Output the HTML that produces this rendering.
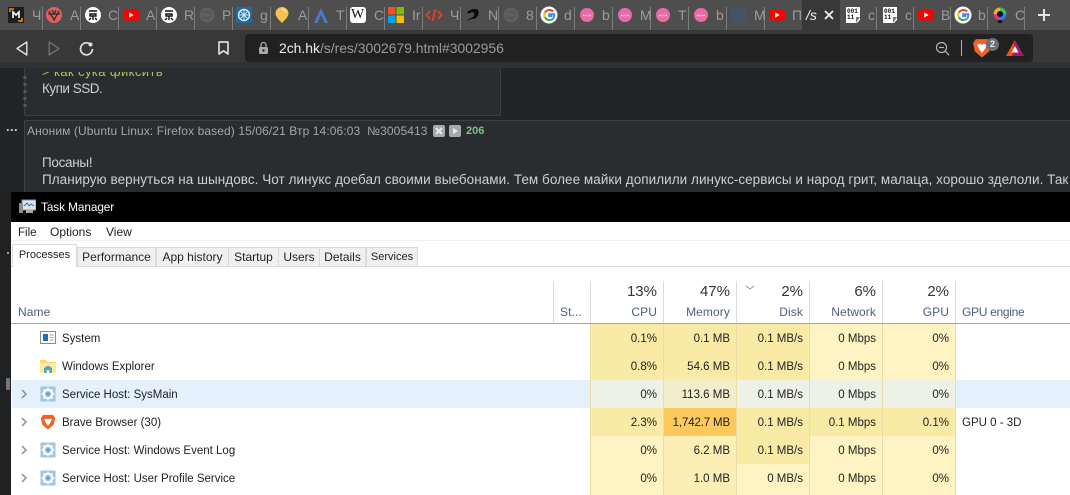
<!DOCTYPE html>
<html><head><meta charset="utf-8">
<style>
html,body{margin:0;padding:0;width:1070px;height:495px;overflow:hidden;background:#222426}
body{position:relative;font-family:"Liberation Sans",sans-serif}
div,span,svg{position:absolute}
span{white-space:nowrap}
.sep{top:7px;width:1px;height:23px;background:#7d7d7d}
.t{top:7px;font-size:14px;color:#9c9c9c;line-height:16px}
.i{top:6px;width:18px;height:18px}
.r{text-align:right;width:60px;font-size:11.5px;color:#222;line-height:18px;white-space:nowrap}
.c{width:73px;height:28px;border-left:1px solid #ecdcA8;box-sizing:border-box}
.l{left:62px;font-size:11.5px;color:#222;line-height:18px}
.h{font-size:12px;color:#4c607a;line-height:16px;letter-spacing:.1px}
.p{text-align:right;width:60px;font-size:15px;color:#333;line-height:18px}
.vs{top:281px;width:1px;height:42px;background:#dcdcdc}
.tab{top:247px;height:19px;background:#f0f0f0;border:1px solid #dadada;border-bottom:none;box-sizing:border-box;font-size:12px;color:#222;line-height:18px;text-align:center}
.ar{left:19px;width:10px;height:10px}
.ic{left:40px;width:16px;height:16px}
</style></head><body>
<svg width="0" height="0" style="left:0;top:0"><defs>
<symbol id="yt" viewBox="0 0 18 18"><rect x="1" y="3.5" width="16" height="11" rx="3" fill="#f00"/><path d="M7.2 6.4v5.2L11.6 9z" fill="#fff"/></symbol>
<symbol id="pk" viewBox="0 0 18 18"><circle cx="9" cy="9" r="7" fill="#e86ca8"/><path d="M5 9.500h1.500M7.500 9.500h1M9.500 9.500h1M11.500 9.500h1.500" stroke="#f9d3e6" stroke-width="1.500"/></symbol>
<symbol id="wh" viewBox="0 0 18 18"><circle cx="9" cy="9" r="8" fill="#fff"/><path d="M5 5h8M6 8h6v2H6zM9 10v4M5 14l2-2M13 14l-2-2" stroke="#111" stroke-width="1.4" fill="none"/></symbol>
<symbol id="gr" viewBox="0 0 18 18"><circle cx="9" cy="9" r="7.500" fill="#5d6063"/><path d="M5 7c3-3 6-1 8 1M5 11c3 2 6 1 8-1" stroke="#53565a" stroke-width="2" fill="none"/></symbol>
<symbol id="g" viewBox="0 0 18 18"><circle cx="9" cy="9" r="8.5" fill="#fff"/><path d="M13.2 5.600A5.200 5.200 0 0 0 4.900 6.600" stroke="#ea4335" stroke-width="2" fill="none"/><path d="M4.900 6.600a5.200 5.200 0 0 0 0 4.800" stroke="#fbbc05" stroke-width="2" fill="none"/><path d="M4.900 11.400a5.200 5.200 0 0 0 8 1.300" stroke="#34a853" stroke-width="2" fill="none"/><path d="M12.900 12.700A5.200 5.200 0 0 0 14.200 8.200H9.200v1.900h3" stroke="#4285f4" stroke-width="2" fill="none"/></symbol>
<symbol id="bin" viewBox="0 0 18 18"><path d="M2 1h14v13l-3 3H2z" fill="#fff"/><path d="M16 11l-4 6v-6z" fill="#777"/><text x="3" y="7" font-size="6" font-weight="bold" font-family="Liberation Mono" fill="#111">001</text><text x="3" y="13" font-size="6" font-weight="bold" font-family="Liberation Mono" fill="#111">11</text></symbol>
<symbol id="gear" viewBox="0 0 16 16"><rect x=".5" y=".5" width="15" height="15" fill="#9cc5e6"/><circle cx="8" cy="8" r="4.200" fill="none" stroke="#fff" stroke-width="2.200"/><path d="M8 1.600v2.400M8 12v2.400M1.600 8H4M12 8h2.400M3.500 3.500l1.700 1.700M10.800 10.800l1.700 1.700M3.500 12.500l1.700-1.700M10.800 5.200l1.700-1.700" stroke="#fff" stroke-width="1.800"/><circle cx="8" cy="8" r="1.600" fill="#5b9bd1"/></symbol>
<symbol id="brave" viewBox="0 0 18 18"><path d="M3.500 1h11l2.500 3.500-1.500 7.500L9 17.500 2.500 12 1 4.500z" fill="#f0622a"/><path d="M4.500 6l3-.8L9 6.300l1.500-1.100 3 .8-2 4L9 13.500 6.500 10z" fill="#fff"/></symbol>
</defs></svg>

<!-- web page -->
<div style="left:24px;top:60px;width:477px;height:56px;background:#2a2d30;border:1px solid #3d4043;box-sizing:border-box;border-radius:2px"></div>
<div style="left:24px;top:120px;width:1060px;height:80px;background:#2a2d30;border:1px solid #3d4043;box-sizing:border-box;border-radius:2px"></div>
<span style="left:42px;top:64px;font-size:13px;line-height:16px;color:#a6c862;letter-spacing:.4px;clip-path:inset(8px 0 0 0)">&gt; как сука фиксить</span>
<span style="left:42px;top:80px;font-size:13.5px;line-height:17px;color:#cfcfcf;letter-spacing:-.5px">Купи SSD.</span>
<span style="left:6px;top:120px;font-size:13px;line-height:14px;color:#c8c8c8;font-weight:bold;letter-spacing:.4px">...</span>
<span style="left:27px;top:124px;font-size:12px;line-height:15px;color:#a3a6a9;letter-spacing:.1px">Аноним (Ubuntu Linux: Firefox based) 15/06/21 Втр 14:06:03 &nbsp;№3005413</span>
<div style="left:433px;top:125px;width:12px;height:12px;background:#a8a8a8;border-radius:2px"></div>
<svg style="left:433px;top:125px" width="12" height="12"><path d="M3 3l6 6M9 3l-6 6" stroke="#e8e8e8" stroke-width="2"/></svg>
<div style="left:449px;top:125px;width:12px;height:12px;background:#a8a8a8;border-radius:2px"></div>
<svg style="left:449px;top:125px" width="12" height="12"><path d="M4 3l5 3-5 3z" fill="#e8e8e8"/></svg>
<span style="left:466px;top:124px;font-size:11px;line-height:15px;color:#7fbe84;font-weight:bold">206</span>
<span style="left:42px;top:154px;font-size:13.5px;line-height:17px;color:#cfcfcf;letter-spacing:-.3px">Посаны!</span>
<span style="left:42px;top:171px;font-size:13.5px;line-height:17px;color:#cfcfcf;letter-spacing:.05px">Планирую вернуться на шындовс. Чот линукс доебал своими выебонами. Тем более майки допилили линукс-сервисы и народ грит, малаца, хорошо зделоли. Так</span>
<!-- dotted left line -->
<svg style="left:22px;top:74px" width="6" height="36"><path d="M3 2V34" stroke="#55585b" stroke-width="3" stroke-dasharray="3 4"/></svg>

<!-- tab strip -->
<div style="left:0;top:0;width:1070px;height:30px;background:#4e4e4e"></div>
<div style="left:0;top:30px;width:1070px;height:32px;background:#383838"></div>
<div style="left:0;top:62px;width:1070px;height:6px;background:#2f3134"></div>
<div style="left:802px;top:0;width:38px;height:30px;background:#383838"></div>

<div class="sep" style="left:42px"></div><div class="sep" style="left:80px"></div><div class="sep" style="left:118px"></div><div class="sep" style="left:156px"></div><div class="sep" style="left:194px"></div><div class="sep" style="left:232px"></div><div class="sep" style="left:270px"></div><div class="sep" style="left:308px"></div><div class="sep" style="left:346px"></div><div class="sep" style="left:384px"></div><div class="sep" style="left:422px"></div><div class="sep" style="left:460px"></div><div class="sep" style="left:498px"></div><div class="sep" style="left:536px"></div><div class="sep" style="left:574px"></div><div class="sep" style="left:612px"></div><div class="sep" style="left:650px"></div><div class="sep" style="left:688px"></div><div class="sep" style="left:726px"></div><div class="sep" style="left:764px"></div><div class="sep" style="left:876px"></div><div class="sep" style="left:913px"></div><div class="sep" style="left:950px"></div><div class="sep" style="left:987px"></div><div class="sep" style="left:1024px"></div>

<!-- tab icons -->
<svg class="i" style="left:8px;width:16px;height:16px;top:7px" viewBox="0 0 16 16"><rect width="16" height="16" fill="#1d1d1d"/><path d="M2 5V2h4M14 11v3h-4" stroke="#f08a24" stroke-width="1.600" fill="none"/><path d="M5 11V5l3 3 3-3v6" stroke="#fff" stroke-width="1.600" fill="none"/></svg>
<span class="t" style="left:32px">Ч</span>
<svg class="i" style="left:45px" viewBox="0 0 18 18"><circle cx="9" cy="9" r="8" fill="#e4605f"/><path d="M4 5l5 9 5-9M7 4l2 4 2-4M3 8h12" stroke="#3a2a2a" stroke-width="1.300" fill="none"/></svg>
<span class="t" style="left:70px">А</span>
<svg class="i" style="left:84px"><use href="#wh"/></svg>
<span class="t" style="left:108px">С</span>
<svg class="i" style="left:122px"><use href="#yt"/></svg>
<span class="t" style="left:146px">А</span>
<svg class="i" style="left:160px"><use href="#wh"/></svg>
<span class="t" style="left:184px">R</span>
<svg class="i" style="left:198px"><use href="#gr"/></svg>
<span class="t" style="left:222px">P</span>
<svg class="i" style="left:236px;width:16px;height:16px;top:7px" viewBox="0 0 16 16"><rect width="16" height="16" fill="#1e6a9e"/><circle cx="8" cy="8" r="5.500" fill="none" stroke="#cfe8f5" stroke-width="1.500"/><path d="M3 8h10M8 3v10M4.500 4.500l7 7M11.500 4.500l-7 7" stroke="#cfe8f5"/></svg>
<span class="t" style="left:260px">g</span>
<svg class="i" style="left:273px" viewBox="0 0 18 18"><path d="M9 1a6.500 6.500 0 0 1 6.500 6.500C15.500 11 11 15 9 17 7 15 2.500 11 2.500 7.500A6.500 6.500 0 0 1 9 1z" fill="#f6c14f"/><path d="M9 3a4 4 0 0 1 4 4" stroke="#fbe29a" stroke-width="1.500" fill="none"/></svg>
<span class="t" style="left:298px">А</span>
<svg class="i" style="left:312px" viewBox="0 0 18 18"><path d="M9 2L2 17h3.500L9 9l3.500 8H16z" fill="#4a78c9"/></svg>
<span class="t" style="left:336px">T</span>
<div style="left:350px;top:7px;width:16px;height:16px;background:#fff;border-radius:3px"></div><span style="left:351px;top:7px;font-size:14px;line-height:16px;color:#111;font-family:'Liberation Serif',serif">W</span>
<span class="t" style="left:374px">С</span>
<svg class="i" style="left:388px;width:16px;height:16px;top:7px" viewBox="0 0 16 16"><rect width="7.500" height="7.500" fill="#f25022"/><rect x="8.500" width="7.500" height="7.500" fill="#7fba00"/><rect y="8.500" width="7.500" height="7.500" fill="#00a4ef"/><rect x="8.500" y="8.500" width="7.500" height="7.500" fill="#ffb900"/></svg>
<span class="t" style="left:412px">Ir</span>
<svg class="i" style="left:425px" viewBox="0 0 18 18"><path d="M5 5L1.500 9 5 13M13 5l3.500 4-3.500 4M10.500 3L7.500 15" stroke="#d8412f" stroke-width="2" fill="none"/></svg>
<span class="t" style="left:450px">Ч</span>
<svg class="i" style="left:464px" viewBox="0 0 18 18"><path d="M3 7c2-4 9-5 11-3 2 3-1 7-2 8-3 1-6 1-9 3 1-2 5-3 7-5 1-2 0-4-2-4-2 1-3 2-5 1z" fill="#0a0a0a"/></svg>
<span class="t" style="left:488px">N</span>
<svg class="i" style="left:502px"><use href="#gr"/></svg>
<span class="t" style="left:526px">8</span>
<svg class="i" style="left:540px"><use href="#g"/></svg>
<span class="t" style="left:564px">d</span>
<svg class="i" style="left:578px"><use href="#pk"/></svg>
<span class="t" style="left:602px">b</span>
<svg class="i" style="left:616px"><use href="#pk"/></svg>
<span class="t" style="left:640px">M</span>
<svg class="i" style="left:654px"><use href="#pk"/></svg>
<span class="t" style="left:678px">T</span>
<svg class="i" style="left:692px"><use href="#pk"/></svg>
<span class="t" style="left:716px">b</span>
<div style="left:731px;top:7px;width:16px;height:16px;background:#465462"></div>
<span class="t" style="left:754px">M</span>
<svg class="i" style="left:768px"><use href="#yt"/></svg>
<span class="t" style="left:792px">П</span>
<span style="left:806px;top:7px;font-size:14px;line-height:16px;color:#f0f0f0;font-style:italic">/s</span>
<svg style="left:823px;top:9px" width="12" height="12"><path d="M2 2l8 8M10 2l-8 8" stroke="#eee" stroke-width="1.800"/></svg>
<svg class="i" style="left:844px"><use href="#bin"/></svg>
<span class="t" style="left:868px">c</span>
<svg class="i" style="left:881px"><use href="#bin"/></svg>
<span class="t" style="left:905px">c</span>
<svg class="i" style="left:917px"><use href="#yt"/></svg>
<span class="t" style="left:941px">B</span>
<svg class="i" style="left:954px"><use href="#g"/></svg>
<span class="t" style="left:978px">b</span>
<svg class="i" style="left:991px" viewBox="0 0 18 18"><circle cx="9" cy="8" r="6.500" fill="#111"/><path d="M9 1.500A6.500 6.500 0 0 1 15.500 8H12a3 3 0 0 0-3-3z" fill="#3fbf5f"/><path d="M15.500 8A6.500 6.500 0 0 1 9 14.500V11a3 3 0 0 0 3-3z" fill="#2f7fe0"/><path d="M9 14.500A6.500 6.500 0 0 1 2.500 8H6a3 3 0 0 0 3 3z" fill="#d83a8a"/><path d="M2.500 8A6.500 6.500 0 0 1 9 1.500V5a3 3 0 0 0-3 3z" fill="#f0b020"/><rect x="7" y="14" width="4" height="3" fill="#111"/></svg>
<span class="t" style="left:1015px">С</span>
<svg style="left:1038px;top:9px" width="12" height="12"><path d="M6 0v12M0 6h12" stroke="#e4e4e4" stroke-width="2"/></svg>

<!-- toolbar -->
<svg style="left:16px;top:41px" width="12" height="15"><path d="M10.800 1v13L1 7.500z" fill="none" stroke="#e2e2e2" stroke-width="1.400" stroke-linejoin="round"/></svg>
<svg style="left:48px;top:41px" width="12" height="15"><path d="M1.200 1v13L11 7.500z" fill="none" stroke="#6e6e6e" stroke-width="1.400" stroke-linejoin="round"/></svg>
<svg style="left:79px;top:41px" width="15" height="15"><path d="M12.500 4.500A6 6 0 1 0 13.500 8" fill="none" stroke="#e2e2e2" stroke-width="1.700"/><circle cx="11.500" cy="3.500" r="2" fill="#e2e2e2"/></svg>
<svg style="left:218px;top:41px" width="11" height="14"><path d="M1 1h9v12L5.500 9.800 1 13z" fill="none" stroke="#dcdcdc" stroke-width="1.700" stroke-linejoin="round"/></svg>
<div style="left:245px;top:34px;width:788px;height:28px;background:#212121;border-radius:4px"></div>
<svg style="left:258px;top:41px" width="11" height="14"><path d="M3 6V4a2.500 2.500 0 0 1 5 0v2" fill="none" stroke="#aaa" stroke-width="1.300"/><rect x="1" y="6" width="9" height="7" rx="1.500" fill="#aaa"/><circle cx="5.500" cy="9.500" r="1.200" fill="#212121"/></svg>
<span style="left:279px;top:39px;font-size:14px;line-height:18px;color:#ededed;letter-spacing:-.05px">2ch.hk<span style="position:static;color:#9a9a9a">/s/res/3002679.html#3002956</span></span>
<svg style="left:935px;top:41px" width="15" height="15"><circle cx="6.500" cy="6.500" r="5" fill="none" stroke="#b5b5b5" stroke-width="1.200"/><path d="M4 6.500h5M10.200 10.200l4 4" stroke="#b5b5b5" stroke-width="1.200"/></svg>
<div style="left:961px;top:40px;width:1px;height:16px;background:#b0b0b0"></div>
<svg style="left:972px;top:38px" width="20" height="20"><use href="#brave"/></svg>
<div style="left:986px;top:38px;width:13px;height:13px;border-radius:50%;background:#6b6f78;color:#eee;font-size:9px;line-height:13px;text-align:center;font-weight:bold">2</div>
<svg style="left:1006px;top:40px" width="18" height="16" viewBox="0 0 18 16"><path d="M9 0L0 16h18z" fill="#9e1f63"/><path d="M9 0L0 16h6z" fill="#ff5000"/><path d="M9 6l-3.500 6.500h7z" fill="#fff"/></svg>

<!-- task manager -->
<div style="left:0;top:192px;width:11px;height:303px;background:#1f2123"></div>
<div style="left:7px;top:252px;width:2px;height:2px;background:#999"></div>
<div style="left:6px;top:378px;width:4px;height:12px;background:#777;border-radius:1px"></div>
<div style="left:11px;top:192px;width:1059px;height:30px;background:#000"></div>
<div style="left:11px;top:222px;width:1059px;height:273px;background:#fff"></div>
<svg style="left:19px;top:199px" width="17" height="15" viewBox="0 0 17 15"><rect x="3" y="1" width="14" height="10" fill="#d8e6f2" stroke="#8a9aa8"/><path d="M5 7l3-3 2 3 2-2 3 2" stroke="#3a6ea5" fill="none"/><rect x="0" y="4" width="4" height="10" fill="#8c8c8c"/><rect x="7" y="11" width="7" height="3" fill="#a8a8a8"/></svg>
<span style="left:41px;top:199px;font-size:11.800px;line-height:16px;color:#fff;letter-spacing:-.08px">Task Manager</span>
<span style="left:18px;top:225px;font-size:11.500px;line-height:16px;color:#222">File</span>
<span style="left:50px;top:224px;font-size:12px;line-height:16px;color:#222">Options</span>
<span style="left:106px;top:224px;font-size:12px;line-height:16px;color:#222">View</span>
<div style="left:11px;top:240px;width:1059px;height:1px;background:#f0f0f0"></div>
<div style="left:11px;top:266px;width:1059px;height:1px;background:#dadada"></div>
<div class="tab" style="left:77px;width:79px">Performance</div>
<div class="tab" style="left:156px;width:73px">App history</div>
<div class="tab" style="left:228px;width:51px">Startup</div>
<div class="tab" style="left:278px;width:42px">Users</div>
<div class="tab" style="left:319px;width:47px">Details</div>
<div class="tab" style="left:366px;width:52px;font-size:11px">Services</div>
<div style="left:12px;top:244px;width:65px;height:23px;background:#fff;border:1px solid #dadada;border-bottom:none;box-sizing:border-box;font-size:11px;color:#222;text-align:center;line-height:20px">Processes</div>

<!-- header -->
<div class="vs" style="left:553px"></div><div class="vs" style="left:590px"></div><div class="vs" style="left:663px"></div><div class="vs" style="left:736px"></div><div class="vs" style="left:809px"></div><div class="vs" style="left:882px"></div><div class="vs" style="left:955px"></div>
<span class="h" style="left:18px;top:304px">Name</span>
<span class="h" style="left:560px;top:304px">St...</span>
<div class="p" style="left:597px;top:283px">13%</div><div class="h r" style="left:597px;top:304px;font-size:12px;line-height:16px;color:#4c607a">CPU</div>
<div class="p" style="left:670px;top:283px">47%</div><div class="h r" style="left:670px;top:304px;font-size:12px;line-height:16px;color:#4c607a">Memory</div>
<svg style="left:745px;top:285px" width="10" height="6"><path d="M1 1l4 3 4-3" stroke="#8b98a8" fill="none"/></svg>
<div class="p" style="left:743px;top:283px">2%</div><div class="h r" style="left:743px;top:304px;font-size:12px;line-height:16px;color:#4c607a">Disk</div>
<div class="p" style="left:816px;top:283px">6%</div><div class="h r" style="left:816px;top:304px;font-size:12px;line-height:16px;color:#4c607a">Network</div>
<div class="p" style="left:889px;top:283px">2%</div><div class="h r" style="left:889px;top:304px;font-size:12px;line-height:16px;color:#4c607a">GPU</div>
<span class="h" style="left:962px;top:304px;letter-spacing:-.3px">GPU engine</span>
<div style="left:11px;top:323px;width:1059px;height:1px;background:#a6a6a6"></div>

<!-- row backgrounds -->
<div style="left:12px;top:380px;width:1058px;height:28px;background:#e4f1fc"></div>

<div class="c" style="left:590px;top:324px;background:#f9eaa6"></div><div class="c" style="left:663px;top:324px;background:#f9eaa6"></div><div class="c" style="left:736px;top:324px;background:#f9eaa6"></div><div class="c" style="left:809px;top:324px;background:#fef3c2"></div><div class="c" style="left:882px;top:324px;background:#fef3c2;border-right:1px solid #ecdca8;width:74px"></div>
<div class="c" style="left:590px;top:352px;background:#f9eaa6"></div><div class="c" style="left:663px;top:352px;background:#f9eaa6"></div><div class="c" style="left:736px;top:352px;background:#f9eaa6"></div><div class="c" style="left:809px;top:352px;background:#fef3c2"></div><div class="c" style="left:882px;top:352px;background:#fef3c2;border-right:1px solid #ecdca8;width:74px"></div>
<div class="c" style="left:590px;top:380px;background:#edf1e6"></div><div class="c" style="left:663px;top:380px;background:#f2eecb"></div><div class="c" style="left:736px;top:380px;background:#edf1e6"></div><div class="c" style="left:809px;top:380px;background:#edf1e6"></div><div class="c" style="left:882px;top:380px;background:#edf1e6;border-right:1px solid #ecdca8;width:74px"></div>
<div class="c" style="left:590px;top:408px;background:#f9eaa6"></div><div class="c" style="left:663px;top:408px;background:#fdc95c"></div><div class="c" style="left:736px;top:408px;background:#f9eaa6"></div><div class="c" style="left:809px;top:408px;background:#f9eaa6"></div><div class="c" style="left:882px;top:408px;background:#f9eaa6;border-right:1px solid #ecdca8;width:74px"></div>
<div class="c" style="left:590px;top:436px;background:#fef3c2"></div><div class="c" style="left:663px;top:436px;background:#fbefb6"></div><div class="c" style="left:736px;top:436px;background:#f9eaa6"></div><div class="c" style="left:809px;top:436px;background:#fef3c2"></div><div class="c" style="left:882px;top:436px;background:#fef3c2;border-right:1px solid #ecdca8;width:74px"></div>
<div class="c" style="left:590px;top:464px;background:#fef3c2;height:31px"></div><div class="c" style="left:663px;top:464px;background:#fbefb6;height:31px"></div><div class="c" style="left:736px;top:464px;background:#fef3c2;height:31px"></div><div class="c" style="left:809px;top:464px;background:#fef3c2;height:31px"></div><div class="c" style="left:882px;top:464px;background:#fef3c2;border-right:1px solid #ecdca8;width:74px;height:31px"></div>

<!-- row 1 -->
<svg class="ic" style="top:330px" viewBox="0 0 16 16"><rect x=".5" y="1.500" width="15" height="12" fill="#fff" stroke="#7f8b96"/><rect x="3" y="4" width="5" height="7" fill="#1f6cc0"/><path d="M9.500 5h4M9.500 7.500h4M9.500 10h4" stroke="#9aa4ad"/></svg>
<span class="l" style="top:330px">System</span>
<div class="r" style="left:597px;top:330px">0.1%</div><div class="r" style="left:670px;top:330px">0.1 MB</div><div class="r" style="left:743px;top:330px">0.1 MB/s</div><div class="r" style="left:816px;top:330px">0 Mbps</div><div class="r" style="left:889px;top:330px">0%</div>
<!-- row 2 -->
<svg class="ic" style="top:358px" viewBox="0 0 16 16"><path d="M0 2h6l1.500 2H16v11H0z" fill="#f8d775"/><path d="M0 5h16v10H0z" fill="#fde9a0"/><path d="M4 15v-5l4-2.500 4 2.500v5h-2.500v-3h-3v3z" fill="#4aa5c9"/></svg>
<span class="l" style="top:358px">Windows Explorer</span>
<div class="r" style="left:597px;top:358px">0.8%</div><div class="r" style="left:670px;top:358px">54.6 MB</div><div class="r" style="left:743px;top:358px">0.1 MB/s</div><div class="r" style="left:816px;top:358px">0 Mbps</div><div class="r" style="left:889px;top:358px">0%</div>
<!-- row 3 -->
<svg class="ar" style="top:389px"><path d="M3 1l4 4-4 4" stroke="#888" stroke-width="1.400" fill="none"/></svg>
<svg class="ic" style="top:386px"><use href="#gear"/></svg>
<span class="l" style="top:386px">Service Host: SysMain</span>
<div class="r" style="left:597px;top:386px">0%</div><div class="r" style="left:670px;top:386px">113.6 MB</div><div class="r" style="left:743px;top:386px">0.1 MB/s</div><div class="r" style="left:816px;top:386px">0 Mbps</div><div class="r" style="left:889px;top:386px">0%</div>
<!-- row 4 -->
<svg class="ar" style="top:417px"><path d="M3 1l4 4-4 4" stroke="#888" stroke-width="1.400" fill="none"/></svg>
<svg class="ic" style="top:414px"><use href="#brave"/></svg>
<span class="l" style="top:414px">Brave Browser (30)</span>
<div class="r" style="left:597px;top:414px">2.3%</div><div class="r" style="left:665px;top:414px;width:65px;letter-spacing:-.15px">1,742.7 MB</div><div class="r" style="left:743px;top:414px">0.1 MB/s</div><div class="r" style="left:816px;top:414px">0.1 Mbps</div><div class="r" style="left:889px;top:414px">0.1%</div>
<span class="l" style="left:962px;top:414px">GPU 0 - 3D</span>
<!-- row 5 -->
<svg class="ar" style="top:445px"><path d="M3 1l4 4-4 4" stroke="#888" stroke-width="1.400" fill="none"/></svg>
<svg class="ic" style="top:442px"><use href="#gear"/></svg>
<span class="l" style="top:442px">Service Host: Windows Event Log</span>
<div class="r" style="left:597px;top:442px">0%</div><div class="r" style="left:670px;top:442px">6.2 MB</div><div class="r" style="left:743px;top:442px">0.1 MB/s</div><div class="r" style="left:816px;top:442px">0 Mbps</div><div class="r" style="left:889px;top:442px">0%</div>
<!-- row 6 -->
<svg class="ar" style="top:473px"><path d="M3 1l4 4-4 4" stroke="#888" stroke-width="1.400" fill="none"/></svg>
<svg class="ic" style="top:470px"><use href="#gear"/></svg>
<span class="l" style="top:470px">Service Host: User Profile Service</span>
<div class="r" style="left:597px;top:470px">0%</div><div class="r" style="left:670px;top:470px">1.0 MB</div><div class="r" style="left:743px;top:470px">0 MB/s</div><div class="r" style="left:816px;top:470px">0 Mbps</div><div class="r" style="left:889px;top:470px">0%</div>
</body></html>
